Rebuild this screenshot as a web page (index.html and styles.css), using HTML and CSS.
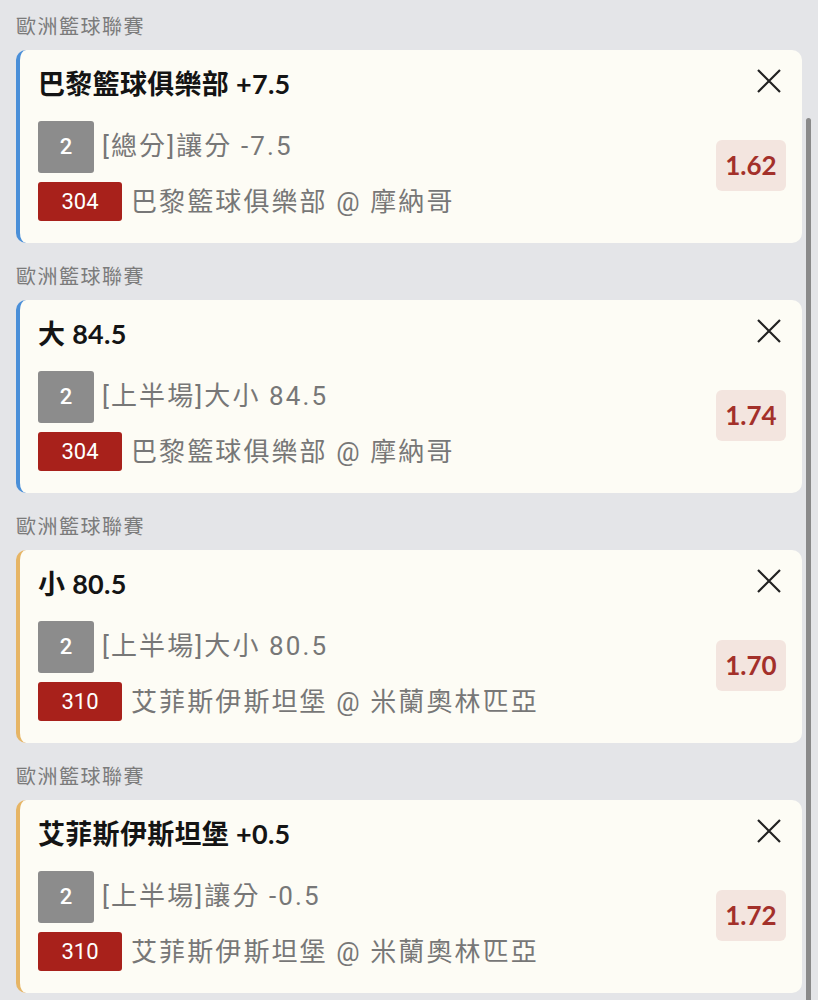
FILE: index.html
```html
<!DOCTYPE html>
<html lang="zh-Hant">
<head>
    <meta charset="UTF-8">
    <meta name="viewport" content="width=device-width, initial-scale=1.0">
    <title>投注單</title>
    <link rel="stylesheet" href="styles.css">
</head>
<body>
    <div class="slip">
        <!-- Bet 1 -->
        <div class="league">歐洲籃球聯賽</div>
        <div class="bet blue">
            <div class="bet-title">巴黎籃球俱樂部 +7.5</div>
            <button class="close" aria-label="remove">
                <svg viewBox="0 0 26 26" width="26" height="26"><path d="M2 2 L24 24 M24 2 L2 24" /></svg>
            </button>
            <div class="bet-body">
                <div class="lines">
                    <div class="line"><span class="tag grey">2</span><span class="market">[總分]讓分 -7.5</span></div>
                    <div class="line"><span class="tag red">304</span><span class="match">巴黎籃球俱樂部 @ 摩納哥</span></div>
                </div>
                <div class="odds">1.62</div>
            </div>
        </div>

        <!-- Bet 2 -->
        <div class="league">歐洲籃球聯賽</div>
        <div class="bet blue">
            <div class="bet-title">大 84.5</div>
            <button class="close" aria-label="remove">
                <svg viewBox="0 0 26 26" width="26" height="26"><path d="M2 2 L24 24 M24 2 L2 24" /></svg>
            </button>
            <div class="bet-body">
                <div class="lines">
                    <div class="line"><span class="tag grey">2</span><span class="market">[上半場]大小 84.5</span></div>
                    <div class="line"><span class="tag red">304</span><span class="match">巴黎籃球俱樂部 @ 摩納哥</span></div>
                </div>
                <div class="odds">1.74</div>
            </div>
        </div>

        <!-- Bet 3 -->
        <div class="league">歐洲籃球聯賽</div>
        <div class="bet gold">
            <div class="bet-title">小 80.5</div>
            <button class="close" aria-label="remove">
                <svg viewBox="0 0 26 26" width="26" height="26"><path d="M2 2 L24 24 M24 2 L2 24" /></svg>
            </button>
            <div class="bet-body">
                <div class="lines">
                    <div class="line"><span class="tag grey">2</span><span class="market">[上半場]大小 80.5</span></div>
                    <div class="line"><span class="tag red">310</span><span class="match">艾菲斯伊斯坦堡 @ 米蘭奧林匹亞</span></div>
                </div>
                <div class="odds">1.70</div>
            </div>
        </div>

        <!-- Bet 4 -->
        <div class="league">歐洲籃球聯賽</div>
        <div class="bet gold">
            <div class="bet-title">艾菲斯伊斯坦堡 +0.5</div>
            <button class="close" aria-label="remove">
                <svg viewBox="0 0 26 26" width="26" height="26"><path d="M2 2 L24 24 M24 2 L2 24" /></svg>
            </button>
            <div class="bet-body">
                <div class="lines">
                    <div class="line"><span class="tag grey">2</span><span class="market">[上半場]讓分 -0.5</span></div>
                    <div class="line"><span class="tag red">310</span><span class="match">艾菲斯伊斯坦堡 @ 米蘭奧林匹亞</span></div>
                </div>
                <div class="odds">1.72</div>
            </div>
        </div>
    </div>

    <!-- Scrollbar -->
    <div class="scrollbar"></div>
</body>
</html>
```

FILE: styles.css
```css
/* General Reset */
body, html {
    margin: 0;
    padding: 0;
    background-color: #e4e5e8;
    font-family: 'Lato', 'Noto Sans CJK TC', sans-serif;
    overflow: hidden;
}

.slip {
    padding: 12px 16px 0 16px;
}

/* League label */
.league {
    font-family: 'Noto Sans CJK TC', sans-serif;
    font-size: 20px;
    line-height: 28px;
    letter-spacing: 1.5px;
    color: #7b7b7b;
    margin-bottom: 10px;
}

/* Bet card */
.bet {
    position: relative;
    background: #fdfcf5;
    border-radius: 10px;
    border-left: 4px solid #4a8fd8;
    padding: 19px 16px 22px 18px;
    margin-bottom: 19px;
    height: 152px;
}

.bet.blue {
    border-left-color: #4a8fd8;
}

.bet.gold {
    border-left-color: #e6b565;
}

.bet-title {
    font-size: 27px;
    font-weight: bold;
    line-height: 30px;
    letter-spacing: 0.3px;
    color: #141414;
}

.close {
    position: absolute;
    top: 18px;
    right: 20px;
    padding: 0;
    border: none;
    background: none;
    cursor: pointer;
}

.close svg path {
    stroke: #222;
    stroke-width: 2.2;
    fill: none;
}

.bet-body {
    display: flex;
    justify-content: space-between;
    align-items: center;
    margin-top: 22px;
}

.lines {
    display: flex;
    flex-direction: column;
    gap: 9px;
}

.line {
    display: flex;
    align-items: center;
    gap: 8px;
    font-family: 'Roboto', 'Noto Sans CJK TC', sans-serif;
    font-size: 26px;
    line-height: 34px;
    letter-spacing: 2.1px;
    color: #777;
}

.market {
    margin-top: -2px;
}

.tag {
    display: flex;
    justify-content: center;
    align-items: center;
    color: #fff;
    border-radius: 3px;
    font-family: 'Roboto', 'Noto Sans', sans-serif;
    font-size: 22px;
    letter-spacing: 0;
}

.tag.grey {
    width: 56px;
    height: 52px;
    background: #8c8c8c;
    font-weight: 500;
}

.tag.red {
    width: 84px;
    height: 39px;
    background: #a8211b;
    margin-right: 1px;
}

/* Odds */
.odds {
    width: 70px;
    height: 51px;
    line-height: 51px;
    text-align: center;
    background: #f3e5df;
    border-radius: 6px;
    color: #a3302a;
    font-size: 26px;
    font-weight: bold;
    margin-bottom: 12px;
}

/* Scrollbar */
.scrollbar {
    position: absolute;
    top: 118px;
    right: 7px;
    width: 5px;
    height: 900px;
    background: #8a8a8a;
    border-radius: 3px;
}
```
